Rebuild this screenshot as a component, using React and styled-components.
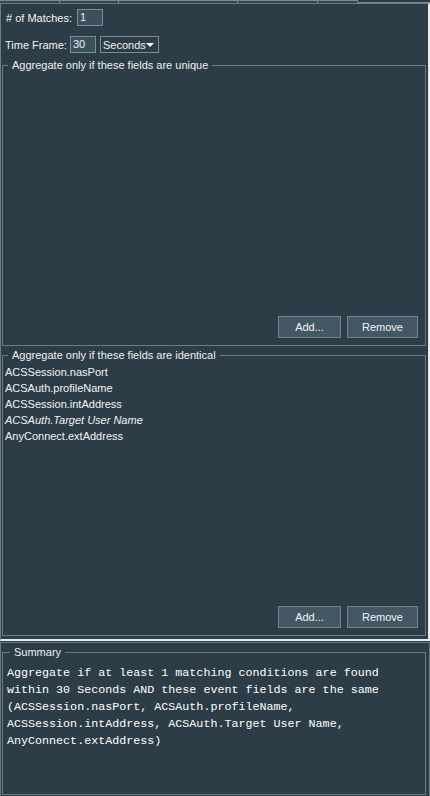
import React from 'react'
import styled, { createGlobalStyle } from 'styled-components'

const GlobalStyle = createGlobalStyle`
  html, body {
    margin: 0;
    padding: 0;
    background: #2c3d47;
  }
  body {
    font-family: "Liberation Sans", Arial, sans-serif;
    font-size: 11px;
    color: #f2f2f2;
  }
`

const Screen = styled.div`
  width: 430px;
  height: 796px;
  display: flex;
  flex-direction: column;
  background: #2c3d47;
  overflow: hidden;
`

const TabStrip = styled.div`
  height: 3px;
  display: flex;
  flex-shrink: 0;
`

const Tab = styled.div`
  width: ${p => p.w}px;
  box-sizing: border-box;
  border-top: 1px solid #7d8a91;
  border-right: 1px solid #7d8a91;
  background: #34464f;
`

const TabFiller = styled.div`
  flex: 1;
  border-bottom: 1px solid #7d8a91;
`

const MainPanel = styled.div`
  height: 638px;
  box-sizing: border-box;
  flex-shrink: 0;
  border-top: 1px solid #6f7d85;
  border-left: 1px solid #6f7d85;
  border-right: 2px solid #e9ecee;
  border-bottom: 2px solid #e9ecee;
  padding: 5px 2px 0 1px;
  display: flex;
  flex-direction: column;
`

const FormRow = styled.div`
  display: flex;
  align-items: center;
  height: 17px;
  padding-left: ${p => p.indent}px;
  margin-bottom: ${p => p.gap}px;
`

const Label = styled.span`
  margin-right: ${p => p.space}px;
  white-space: nowrap;
`

const TextBox = styled.div`
  width: ${p => p.w}px;
  height: 17px;
  box-sizing: border-box;
  border: 1px solid #7e8c94;
  background: #3b505d;
  padding-left: 2px;
  line-height: 15px;
  margin-right: ${p => p.space || 0}px;
`

const Dropdown = styled.div`
  width: 59px;
  height: 17px;
  box-sizing: border-box;
  border: 1px solid #7e8c94;
  background: #2c3d47;
  padding: 0 7px 0 2px;
  display: flex;
  align-items: center;
  justify-content: space-between;
`

const Caret = styled.span`
  width: 0;
  height: 0;
  border-left: 4px solid transparent;
  border-right: 4px solid transparent;
  border-top: 4px solid #ffffff;
`

const Group = styled.fieldset`
  margin: 0 0 ${p => p.after}px 0;
  padding: ${p => p.pad};
  height: ${p => p.h}px;
  box-sizing: border-box;
  min-inline-size: 0;
  border: 1px solid #6c7a82;
  flex-shrink: 0;
`

const Legend = styled.legend`
  margin-left: 3px;
  padding: 0 4px 0 4px;
  line-height: 14px;
  color: #eef0f1;
`

const GroupBody = styled.div`
  height: ${p => p.h}px;
  display: flex;
  flex-direction: column;
`

const FieldList = styled.ul`
  list-style: none;
  margin: 0;
  padding: 2px 0 0 0;
  flex: 1;
`

const FieldItem = styled.li`
  height: 16px;
  line-height: 16px;
  font-style: ${p => (p.derived ? 'italic' : 'normal')};
`

const ButtonBar = styled.div`
  display: flex;
  justify-content: flex-end;
  gap: 6px;
`

const Button = styled.button`
  width: ${p => p.w}px;
  height: 22px;
  box-sizing: border-box;
  border: 1px solid #75858e;
  background: #435764;
  color: #f4f4f4;
  font-family: "Liberation Sans", Arial, sans-serif;
  font-size: 11px;
  padding: 0;
`

const SummaryPanel = styled.div`
  flex: 1;
  margin-top: 1px;
  box-sizing: border-box;
  border: 1px solid #6a7880;
  padding: 2px 3px 1px 1px;
  display: flex;
  flex-direction: column;
`

const SummaryText = styled.p`
  margin: 0;
  font-family: "Liberation Mono", "Courier New", monospace;
  font-size: 11.7px;
  line-height: 17px;
  white-space: pre;
  color: #ffffff;
`

const uniqueFields = []

const identicalFields = [
  { name: 'ACSSession.nasPort' },
  { name: 'ACSAuth.profileName' },
  { name: 'ACSSession.intAddress' },
  { name: 'ACSAuth.Target User Name', derived: true },
  { name: 'AnyConnect.extAddress' },
]

const summary = [
  'Aggregate if at least 1 matching conditions are found',
  'within 30 Seconds AND these event fields are the same',
  '(ACSSession.nasPort, ACSAuth.profileName,',
  'ACSSession.intAddress, ACSAuth.Target User Name,',
  'AnyConnect.extAddress)',
].join('\n')

const FieldGroup = ({ title, fields, after }) => (
  <Group h={288} after={after} pad="0 7px 7px 2px">
    <Legend>{title}</Legend>
    <GroupBody h={266}>
      <FieldList>
        {fields.map(f => (
          <FieldItem key={f.name} derived={f.derived}>{f.name}</FieldItem>
        ))}
      </FieldList>
      <ButtonBar>
        <Button w={63}>Add...</Button>
        <Button w={71}>Remove</Button>
      </ButtonBar>
    </GroupBody>
  </Group>
)

export default function App() {
  return (
    <Screen>
      <GlobalStyle />
      <TabStrip>
        <Tab w={60} />
        <Tab w={59} />
        <Tab w={119} />
        <Tab w={80} />
        <Tab w={40} />
        <TabFiller />
      </TabStrip>
      <MainPanel>
        <FormRow indent={4} gap={10}>
          <Label space={5}># of Matches:</Label>
          <TextBox w={26}>1</TextBox>
        </FormRow>
        <FormRow indent={3} gap={5}>
          <Label space={3}>Time Frame:</Label>
          <TextBox w={26} space={4}>30</TextBox>
          <Dropdown>
            Seconds
            <Caret />
          </Dropdown>
        </FormRow>
        <FieldGroup title="Aggregate only if these fields are unique" fields={uniqueFields} after={2} />
        <FieldGroup title="Aggregate only if these fields are identical" fields={identicalFields} after={0} />
      </MainPanel>
      <SummaryPanel>
        <Group h={150} after={0} pad="6px 4px 0 4px">
          <Legend>Summary</Legend>
          <SummaryText>{summary}</SummaryText>
        </Group>
      </SummaryPanel>
    </Screen>
  )
}
